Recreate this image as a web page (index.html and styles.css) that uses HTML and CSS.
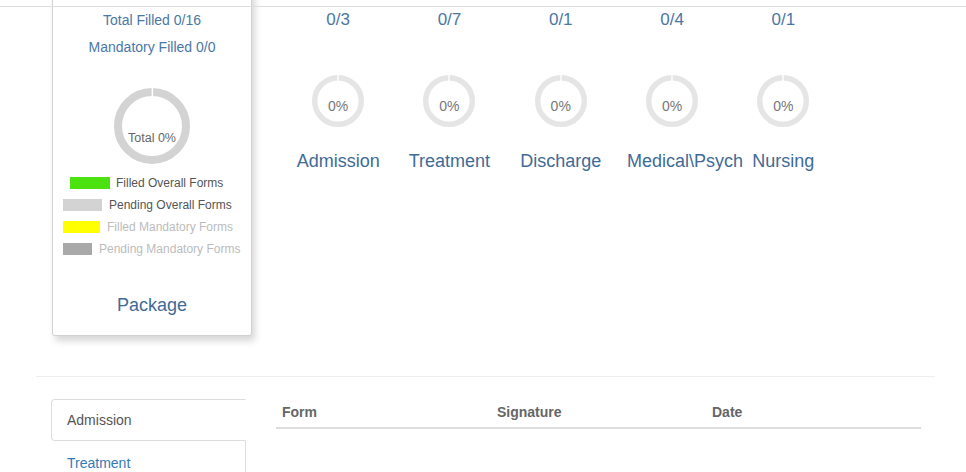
FILE: index.html
```html
<!DOCTYPE html>
<html>
<head>
<meta charset="utf-8">
<link rel="stylesheet" href="styles.css">
</head>
<body>
<div class="topline"></div>
<section class="top">
  <div class="card">
    <div class="card-line">Total Filled 0/16</div>
    <div class="card-line">Mandatory Filled 0/0</div>
    <div class="big-donut">
      <svg width="76" height="76" viewBox="0 0 76 76">
        <circle cx="38" cy="38" r="34" fill="none" stroke="#d3d3d3" stroke-width="8"/>
        <rect x="37.6" y="0" width="1.6" height="10" fill="#fff"/>
      </svg>
      <span class="big-donut-text">Total 0%</span>
    </div>
    <ul class="legend">
      <li class="legend-row row-a"><span class="swatch sw-green"></span><span class="legend-text">Filled Overall Forms</span></li>
      <li class="legend-row row-b"><span class="swatch sw-light"></span><span class="legend-text">Pending Overall Forms</span></li>
      <li class="legend-row row-c"><span class="swatch sw-yellow"></span><span class="legend-text muted">Filled Mandatory Forms</span></li>
      <li class="legend-row row-d"><span class="swatch sw-dark"></span><span class="legend-text muted">Pending Mandatory Forms</span></li>
    </ul>
    <div class="card-title">Package</div>
  </div>

  <div class="cat">
    <div class="cat-count">0/3</div>
    <div class="small-donut">
      <svg width="52" height="52" viewBox="0 0 52 52"><circle cx="26" cy="26" r="23.3" fill="none" stroke="#e5e5e5" stroke-width="5.4"/><rect x="25.3" y="0" width="1.4" height="7" fill="#fff"/></svg>
      <span class="small-donut-text">0%</span>
    </div>
    <div class="cat-label">Admission</div>
  </div>
  <div class="cat">
    <div class="cat-count">0/7</div>
    <div class="small-donut">
      <svg width="52" height="52" viewBox="0 0 52 52"><circle cx="26" cy="26" r="23.3" fill="none" stroke="#e5e5e5" stroke-width="5.4"/><rect x="25.3" y="0" width="1.4" height="7" fill="#fff"/></svg>
      <span class="small-donut-text">0%</span>
    </div>
    <div class="cat-label">Treatment</div>
  </div>
  <div class="cat">
    <div class="cat-count">0/1</div>
    <div class="small-donut">
      <svg width="52" height="52" viewBox="0 0 52 52"><circle cx="26" cy="26" r="23.3" fill="none" stroke="#e5e5e5" stroke-width="5.4"/><rect x="25.3" y="0" width="1.4" height="7" fill="#fff"/></svg>
      <span class="small-donut-text">0%</span>
    </div>
    <div class="cat-label">Discharge</div>
  </div>
  <div class="cat">
    <div class="cat-count">0/4</div>
    <div class="small-donut">
      <svg width="52" height="52" viewBox="0 0 52 52"><circle cx="26" cy="26" r="23.3" fill="none" stroke="#e5e5e5" stroke-width="5.4"/><rect x="25.3" y="0" width="1.4" height="7" fill="#fff"/></svg>
      <span class="small-donut-text">0%</span>
    </div>
    <div class="cat-label">Medical\Psych</div>
  </div>
  <div class="cat">
    <div class="cat-count">0/1</div>
    <div class="small-donut">
      <svg width="52" height="52" viewBox="0 0 52 52"><circle cx="26" cy="26" r="23.3" fill="none" stroke="#e5e5e5" stroke-width="5.4"/><rect x="25.3" y="0" width="1.4" height="7" fill="#fff"/></svg>
      <span class="small-donut-text">0%</span>
    </div>
    <div class="cat-label">Nursing</div>
  </div>
</section>

<hr class="divider">

<section class="bottom">
  <ul class="tabs">
    <li class="tab active"><a class="tab-link">Admission</a></li>
    <li class="tab"><a class="tab-link">Treatment</a></li>
  </ul>
  <table class="forms">
    <thead>
      <tr><th>Form</th><th>Signature</th><th>Date</th></tr>
    </thead>
  </table>
</section>
</body>
</html>
```

FILE: styles.css
```css
html, body {
  margin: 0;
  padding: 0;
  background: #fff;
  font-family: "Liberation Sans", Arial, sans-serif;
  overflow: hidden;
}

.topline {
  position: fixed;
  top: 6px;
  left: 0;
  right: 0;
  height: 1px;
  background: #dedede;
  z-index: 5;
}

.top {
  display: flex;
  align-items: flex-start;
  padding-left: 52px;
  height: 376px;
}

.card {
  box-sizing: border-box;
  width: 200px;
  margin-top: -10px;
  padding: 16px 0 20px;
  border: 1px solid #d2d2d2;
  border-radius: 3px;
  box-shadow: 3px 5px 7px rgba(0, 0, 0, 0.16);
  background: #fff;
  text-align: center;
}

.card-line {
  font-size: 14px;
  line-height: 27px;
  color: #4a77a6;
}

.big-donut {
  position: relative;
  width: 76px;
  height: 76px;
  margin: 27px auto 0;
}

.big-donut svg {
  display: block;
}

.big-donut-text {
  position: absolute;
  left: -10px;
  right: -10px;
  top: 43px;
  font-size: 12.5px;
  line-height: 14px;
  color: #666;
  text-align: center;
  white-space: nowrap;
}

.legend {
  list-style: none;
  margin: 8px 0 0;
  padding: 0;
  text-align: left;
}

.legend-row {
  display: flex;
  align-items: center;
  height: 22px;
  font-size: 12px;
  color: #555;
  white-space: nowrap;
}

.swatch {
  display: block;
  height: 12px;
  margin-right: 6px;
  flex: none;
}

.row-a { padding-left: 17px; }
.row-b, .row-c, .row-d { padding-left: 10px; }

.sw-green { width: 40px; background: #4be20f; }
.sw-light { width: 39px; background: #d3d3d3; margin-right: 7px; }
.sw-yellow { width: 37px; background: #ffff00; margin-right: 7px; }
.sw-dark { width: 29px; background: #a9a9a9; margin-right: 7px; }

.legend-text.muted {
  color: #bcbcbc;
}

.card-title {
  margin-top: 35px;
  font-size: 18px;
  line-height: 20px;
  color: #3f6b97;
}

.cat {
  box-sizing: border-box;
  width: 111.3px;
  flex: none;
  padding: 8px 10.5px 0;
  text-align: center;
}

.card + .cat {
  margin-left: 30.5px;
}

.cat-count {
  font-size: 17px;
  line-height: 24px;
  color: #4a77a6;
}

.small-donut {
  position: relative;
  width: 52px;
  height: 52px;
  margin: 43px auto 0;
}

.small-donut svg {
  display: block;
}

.small-donut-text {
  position: absolute;
  left: -10px;
  right: -10px;
  top: 23px;
  font-size: 14px;
  line-height: 16px;
  color: #777;
  text-align: center;
}

.cat-label {
  margin-top: 23px;
  font-size: 18px;
  line-height: 22px;
  color: #3f6b97;
  white-space: nowrap;
}

.divider {
  margin: 0 31px 0 36px;
  border: 0;
  height: 1px;
  background: #eeeeee;
}

.bottom {
  display: flex;
  align-items: flex-start;
  padding-left: 51px;
}

.tabs {
  list-style: none;
  margin: 22px 0 0;
  padding: 0;
  width: 195px;
  box-sizing: border-box;
  border-right: 1px solid #ddd;
}

.tab {
  margin-right: -1px;
  margin-bottom: 1px;
}

.tab-link {
  display: block;
  padding: 10px 15px;
  font-size: 14px;
  line-height: 20px;
  color: #337ab7;
  border: 1px solid transparent;
  border-radius: 4px 0 0 4px;
}

.tab.active .tab-link {
  color: #555;
  background: #fff;
  border-color: #ddd;
  border-right-color: transparent;
}

.forms {
  margin: 20px 0 0 30px;
  width: 645px;
  border-collapse: collapse;
  table-layout: fixed;
}

.forms th {
  padding: 5px 6px;
  font-size: 14px;
  line-height: 20px;
  font-weight: bold;
  color: #666;
  text-align: left;
  border-bottom: 2px solid #ddd;
}
```
